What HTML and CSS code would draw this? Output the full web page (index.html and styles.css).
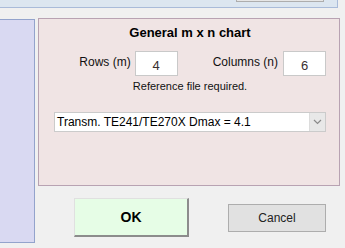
FILE: index.html
```html
<!DOCTYPE html>
<html lang="en">
<head>
    <meta charset="UTF-8">
    <title>General m x n chart</title>
    <link rel="stylesheet" href="styles.css">
</head>
<body>
    <div class="topbar">
        <div class="topbar-button"></div>
    </div>

    <div class="main">
        <div class="sidebar"></div>

        <div class="right-column">
            <div class="panel">
                <div class="panel-title">General m x n chart</div>

                <div class="size-row">
                    <label class="size-label" for="rows">Rows (m)</label>
                    <input class="size-input" id="rows" type="text" value="4">
                    <label class="size-label columns" for="cols">Columns (n)</label>
                    <input class="size-input" id="cols" type="text" value="6">
                </div>

                <div class="note">Reference file required.</div>

                <div class="select-box">
                    <div class="select-text">Transm. TE241/TE270X Dmax = 4.1</div>
                    <div class="select-arrow">
                        <svg width="9" height="6" viewBox="0 0 9 6">
                            <path d="M1 1 L4.5 4.5 L8 1" fill="none" stroke="#8a8a8a" stroke-width="1.2"/>
                        </svg>
                    </div>
                </div>
            </div>

            <div class="actions">
                <button class="btn btn-ok">OK</button>
                <button class="btn btn-cancel">Cancel</button>
            </div>
        </div>
    </div>
</body>
</html>
```

FILE: styles.css
```css
body {
    margin: 0;
    padding: 0;
    background-color: #f0f0f0;
    font-family: 'Liberation Sans', Arial, sans-serif;
    width: 345px;
    height: 248px;
    overflow: hidden;
}

.topbar {
    box-sizing: border-box;
    width: 338px;
    height: 8px;
    background-color: #dce6f0;
    border-right: 1px solid #a9bbd9;
    border-bottom: 1px solid #a9bbd9;
}

.topbar-button {
    box-sizing: border-box;
    width: 88px;
    height: 2px;
    margin-left: 236px;
    background-color: #e6e6e6;
    border: 1px solid #adadad;
    border-top: none;
}

.main {
    display: flex;
    align-items: flex-start;
    gap: 2px;
    margin-top: 10px;
}

.sidebar {
    box-sizing: border-box;
    width: 35px;
    height: 224px;
    margin-top: 1px;
    background-color: #d9d9f2;
    border: 1px solid #93a3cc;
    border-left: none;
}

.right-column {
    display: flex;
    flex-direction: column;
}

.panel {
    box-sizing: border-box;
    width: 302px;
    height: 168px;
    margin-left: 1px;
    background-color: #f0e4e4;
    border: 1px solid #b8a2b2;
    padding: 6px 13px 0 15px;
}

.panel-title {
    font-size: 13px;
    font-weight: bold;
    line-height: 16px;
    text-align: center;
    color: #000;
}

.size-row {
    display: flex;
    align-items: center;
    justify-content: flex-end;
    margin-top: 10px;
}

.size-label {
    font-size: 12px;
    line-height: 14px;
    color: #111;
    padding-bottom: 4px;
    margin-right: 4px;
}

.size-label.columns {
    margin-left: 35px;
    margin-right: 5px;
}

.size-input {
    box-sizing: border-box;
    width: 43px;
    height: 25px;
    border: 1px solid #c9c9c9;
    background-color: #fff;
    font-family: 'Liberation Sans', Arial, sans-serif;
    font-size: 13px;
    color: #3a3030;
    text-align: center;
    padding: 3px 0 0 0;
    outline: none;
}

.note {
    font-size: 11px;
    line-height: 13px;
    text-align: center;
    color: #111;
    margin-top: 4px;
}

.select-box {
    box-sizing: border-box;
    display: flex;
    height: 20px;
    margin-top: 19px;
    background-color: #fff;
    border: 1px solid #cbcbcb;
}

.select-text {
    flex-grow: 1;
    font-size: 12px;
    line-height: 18px;
    padding-left: 2px;
    color: #000;
}

.select-arrow {
    width: 15px;
    display: flex;
    align-items: center;
    justify-content: center;
    background-color: #e8e8e8;
    border-left: 1px solid #dcdcdc;
}

.actions {
    display: flex;
    align-items: flex-start;
    margin-top: 12px;
}

.btn {
    box-sizing: border-box;
    font-family: 'Liberation Sans', Arial, sans-serif;
    color: #000;
    padding: 0;
}

.btn-ok {
    width: 115px;
    height: 39px;
    margin-left: 37px;
    background-color: #e6fde6;
    border-top: 1px solid #e0e0e0;
    border-left: 1px solid #e0e0e0;
    border-right: 2px solid #8c8c8c;
    border-bottom: 2px solid #8c8c8c;
    font-size: 14px;
    font-weight: bold;
}

.btn-cancel {
    width: 98px;
    height: 28px;
    margin-left: 39px;
    margin-top: 6px;
    background-color: #e1e1e1;
    border: 1px solid #adadad;
    font-size: 12px;
    color: #222;
}
```
